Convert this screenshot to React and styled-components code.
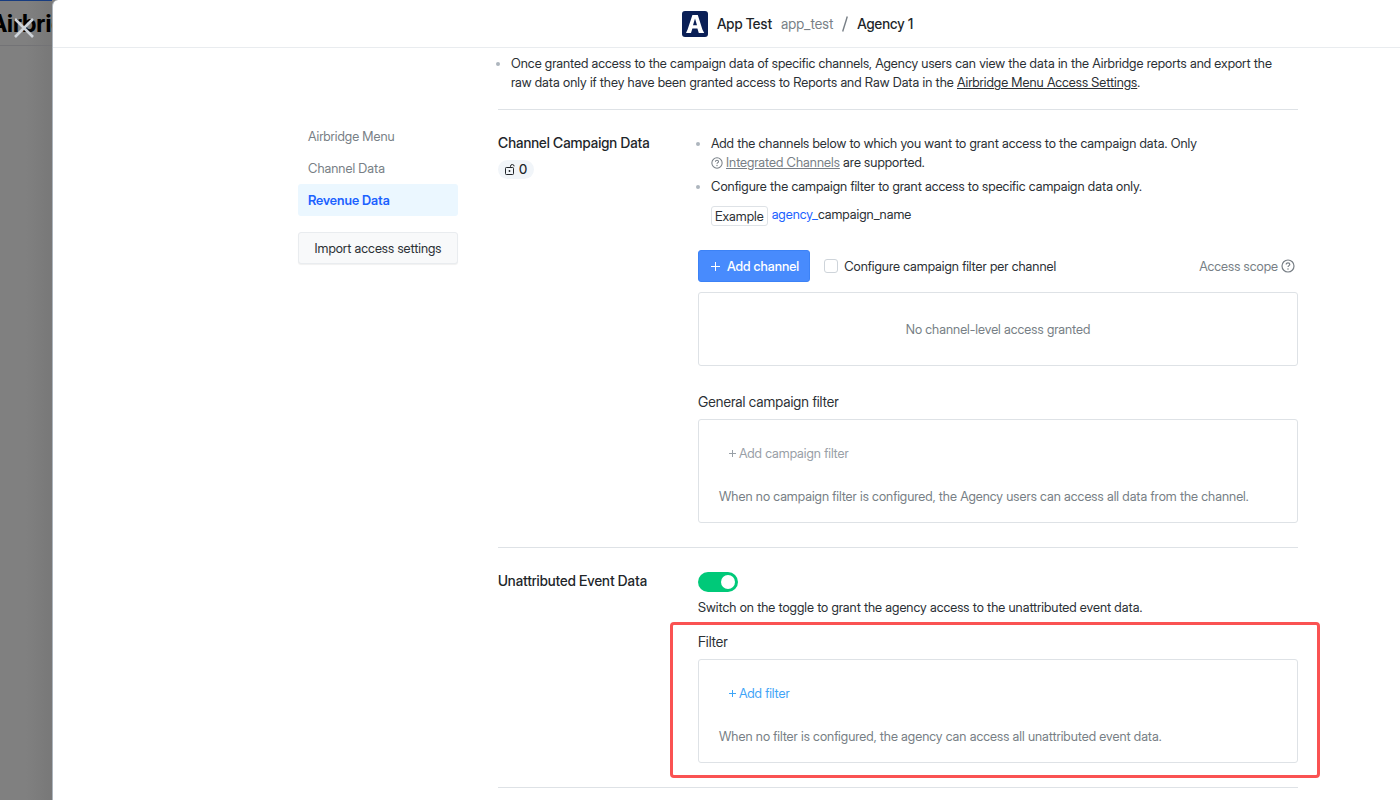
import React, {useState} from 'react'
import styled, {createGlobalStyle} from 'styled-components'

export default function App () {

    const [perChannel, setPerChannel] = useState(false);
    const [unattributed, setUnattributed] = useState(true);

    return (
        <>
            <GlobalStyle />
            <Page>
                <Backdrop>
                    <Brand>Airbridge</Brand>
                    <CloseButton type='button' aria-label='Close'>
                        <CloseIcon />
                    </CloseButton>
                </Backdrop>

                <Panel>
                    <Header>
                        <AppIcon />
                        <Crumb>App Test</Crumb>
                        <CrumbId>app_test</CrumbId>
                        <Slash />
                        <Crumb>Agency 1</Crumb>
                    </Header>

                    <Body>
                        <SideBar>
                            <SideLink href='#menu'>Airbridge Menu</SideLink>
                            <SideLink href='#channel'>Channel Data</SideLink>
                            <SideLink href='#revenue' $active>Revenue Data</SideLink>
                            <ImportButton type='button'>Import access settings</ImportButton>
                        </SideBar>

                        <Main>
                            <Intro>
                                <List>
                                    <ListItem>
                                        Once granted access to the campaign data of specific channels, Agency users can view the data in the Airbridge reports and export the raw data only if they have been granted access to Reports and Raw Data in the <TextLink href='#menu'>Airbridge Menu Access Settings</TextLink>.
                                    </ListItem>
                                </List>
                            </Intro>

                            <Section id='channel'>
                                <SectionLabel>
                                    <SectionTitle>Channel Campaign Data</SectionTitle>
                                    <Badge><UnlockIcon />0</Badge>
                                </SectionLabel>
                                <SectionContent>
                                    <List>
                                        <ListItem>
                                            Add the channels below to which you want to grant access to the campaign data. Only <HelpLink href='#channels'><HelpIcon size={12} /><u>Integrated Channels</u></HelpLink> are supported.
                                        </ListItem>
                                        <ListItem>
                                            Configure the campaign filter to grant access to specific campaign data only.
                                        </ListItem>
                                    </List>
                                    <Example>
                                        <Tag>Example</Tag>
                                        <span><Prefix>agency_</Prefix>campaign_name</span>
                                    </Example>
                                    <Actions>
                                        <AddButton type='button'><PlusIcon size={9} />Add channel</AddButton>
                                        <CheckLabel>
                                            <CheckBox
                                                type='checkbox'
                                                checked={perChannel}
                                                onChange={() => setPerChannel(!perChannel)}
                                            />
                                            Configure campaign filter per channel
                                        </CheckLabel>
                                        <Scope>Access scope<HelpIcon size={14} /></Scope>
                                    </Actions>
                                    <EmptyBox>No channel-level access granted</EmptyBox>
                                    <FilterGroup $gap='24px'>
                                        <FilterTitle>General campaign filter</FilterTitle>
                                        <FilterBox>
                                            <FilterButton type='button' disabled><PlusIcon size={7} />Add campaign filter</FilterButton>
                                            <Note>When no campaign filter is configured, the Agency users can access all data from the channel.</Note>
                                        </FilterBox>
                                    </FilterGroup>
                                </SectionContent>
                            </Section>

                            <Section id='revenue'>
                                <SectionLabel>
                                    <SectionTitle>Unattributed Event Data</SectionTitle>
                                </SectionLabel>
                                <SectionContent>
                                    <Switch
                                        type='checkbox'
                                        role='switch'
                                        id='unattributed'
                                        checked={unattributed}
                                        onChange={() => setUnattributed(!unattributed)}
                                    />
                                    <SwitchLabel htmlFor='unattributed'>
                                        Switch on the toggle to grant the agency access to the unattributed event data.
                                    </SwitchLabel>
                                    <FilterGroup $gap='13px'>
                                        <FilterTitle>Filter</FilterTitle>
                                        <FilterBox>
                                            <FilterButton type='button'><PlusIcon size={7} />Add filter</FilterButton>
                                            <Note>When no filter is configured, the agency can access all unattributed event data.</Note>
                                        </FilterBox>
                                        <Highlight />
                                    </FilterGroup>
                                </SectionContent>
                            </Section>
                        </Main>
                    </Body>
                </Panel>
            </Page>
        </>
    )
}

// icons

const CloseIcon = () => (
    <svg width='20' height='20' viewBox='0 0 20 20' fill='none' stroke='currentColor' strokeWidth='2.6'>
        <path d='M1 1l18 18M19 1L1 19' />
    </svg>
)

const PlusIcon = ({size}) => (
    <svg width={size} height={size} viewBox={`0 0 ${size} ${size}`} fill='none' stroke='currentColor' strokeWidth='1'>
        <path d={`M${size / 2} 0v${size}M0 ${size / 2}h${size}`} />
    </svg>
)

const HelpIcon = ({size}) => (
    <svg width={size} height={size} viewBox='0 0 14 14' fill='none' stroke='currentColor' strokeWidth='1.2'>
        <circle cx='7' cy='7' r='6' />
        <path d='M5.2 5.6c0-1.1.8-1.8 1.8-1.8s1.8.7 1.8 1.6c0 1.2-1.8 1.3-1.8 2.6' />
        <circle cx='7' cy='9.9' r='.75' fill='currentColor' stroke='none' />
    </svg>
)

const UnlockIcon = () => (
    <svg width='11' height='12' viewBox='0 0 11 12' fill='none' stroke='currentColor' strokeWidth='1'>
        <rect x='.5' y='3.5' width='8' height='7' rx='.8' />
        <path d='M5.5 3.5V2.3a1.8 1.8 0 0 1 3.6 0' />
        <circle cx='4.5' cy='7' r='.9' fill='currentColor' stroke='none' />
    </svg>
)

const Slash = () => (
    <svg width='6' height='16' viewBox='0 0 6 16' fill='none' stroke='#787f86' strokeWidth='1.4'>
        <path d='M5.3 .5L.7 15.5' />
    </svg>
)

const AppIcon = () => (
    <svg width='26' height='26' viewBox='0 0 26 26'>
        <rect width='26' height='26' rx='3' fill='#0a1f56' />
        <path fillRule='evenodd' fill='#fff' d='M10.4 4h5.4l4.6 14.6L22.2 22h-5.4l-1.4-4.4h-5L9 22H4l1.6-3.4zM13 7.6l-2 6.6h4z' />
    </svg>
)

// styles

const GlobalStyle = createGlobalStyle`
    * {
        box-sizing: border-box;
    }
    body {
        margin: 0;
        font-family: "Inter Display", Inter, "Liberation Sans", sans-serif;
        font-size: 13px;
        line-height: 19px;
        color: #2b3035;
        background: #fff;
    }
    button, input {
        font-family: inherit;
        font-size: inherit;
        margin: 0;
    }
    svg {
        flex: none;
    }
`

const Page = styled.div`
    display: flex;
    min-height: 100vh;
    background: #808080;
`

const Backdrop = styled.div`
    position: relative;
    flex: none;
    width: 52px;
    overflow: hidden;
    border-top: 1px solid #173c80;
    background: linear-gradient(to right, #808080 50%, #787878);
`

const Brand = styled.div`
    height: 45px;
    margin-left: -10px;
    border-bottom: 1px solid #737376;
    color: #000;
    font-size: 24px;
    font-weight: 700;
    line-height: 45px;
`

const CloseButton = styled.button`
    position: absolute;
    top: 17px;
    left: 14px;
    display: flex;
    padding: 0;
    border: 0;
    background: none;
    color: #ced4da;
    cursor: pointer;
`

const Panel = styled.div`
    flex: 1;
    min-width: 0;
    border-left: 1px solid #adb5bd;
    border-radius: 6px 0 0 0;
    background: #fff;
`

const Header = styled.header`
    display: flex;
    align-items: center;
    justify-content: center;
    gap: 9px;
    height: 48px;
    padding-left: 142px;
    border-bottom: 1px solid #e9ecef;
    font-size: 14px;
`

const Crumb = styled.span`
    color: #212529;
    font-weight: 500;
`

const CrumbId = styled.span`
    color: #787f86;
`

const Body = styled.div`
    display: flex;
    justify-content: center;
    gap: 40px;
    padding-left: 143px;
`

const SideBar = styled.nav`
    display: flex;
    flex-direction: column;
    flex: none;
    width: 160px;
    padding-top: 72px;
`

const SideLink = styled.a`
    padding: 0 10px;
    border-radius: 3px;
    background: ${(props) => (props.$active ? '#ebf7ff' : 'transparent')};
    color: ${(props) => (props.$active ? '#1c62ff' : '#787f86')};
    font-weight: ${(props) => (props.$active ? 600 : 400)};
    line-height: 32px;
    text-decoration: none;
`

const ImportButton = styled.button`
    height: 32px;
    margin-top: 16px;
    padding: 0;
    border: 1px solid #e9ecef;
    border-radius: 3px;
    background: #f8f9fa;
    box-shadow: 0 1px 1px rgba(0, 0, 0, 0.06);
    color: #2b3035;
    cursor: pointer;
`

const Main = styled.main`
    flex: 0 1 800px;
    min-width: 0;
`

const Intro = styled.div`
    padding: 6px 0 17px;
    border-bottom: 1px solid #dee2e6;
`

const Section = styled.section`
    display: flex;
    padding: 24px 0;
    border-bottom: 1px solid #dee2e6;
`

const SectionLabel = styled.div`
    flex: none;
    width: 200px;
`

const SectionContent = styled.div`
    flex: 1;
    min-width: 0;
`

const SectionTitle = styled.h2`
    margin: 0;
    color: #212529;
    font-size: 14px;
    font-weight: 500;
    line-height: 18px;
`

const Badge = styled.span`
    display: inline-flex;
    align-items: center;
    gap: 3px;
    margin-top: 8px;
    padding: 0 7px;
    border-radius: 10px;
    background: #f1f5f9;
    color: #212529;
    font-weight: 500;
`

const List = styled.ul`
    display: flex;
    flex-direction: column;
    gap: 5px;
    margin: 0;
    padding: 0;
    list-style: none;
`

const ListItem = styled.li`
    position: relative;
    padding: 0 10px 0 13px;
    &::before {
        content: '';
        position: absolute;
        top: 8px;
        left: -2px;
        width: 4px;
        height: 4px;
        border-radius: 50%;
        background: #adb5bd;
    }
`

const TextLink = styled.a`
    color: inherit;
`

const HelpLink = styled.a`
    color: #787f86;
    text-decoration: none;
    white-space: nowrap;
    svg {
        margin-right: 3px;
        vertical-align: -2px;
    }
`

const Example = styled.div`
    display: flex;
    gap: 4px;
    margin: 9px 0 0 13px;
`

const Tag = styled.span`
    padding: 0 3px;
    margin-top: 1px;
    border: 1px solid #dee2e6;
    border-radius: 3px;
    line-height: 18px;
`

const Prefix = styled.span`
    color: #1c62ff;
`

const Actions = styled.div`
    display: flex;
    align-items: center;
    margin: 24px 0 10px;
`

const AddButton = styled.button`
    display: flex;
    align-items: center;
    gap: 7px;
    height: 32px;
    padding: 0 10px 0 12px;
    border: 1px solid #3c82f6;
    border-radius: 3px;
    background: #488bfd;
    color: #fff;
    font-weight: 500;
    cursor: pointer;
`

const CheckLabel = styled.label`
    display: flex;
    align-items: center;
    gap: 6px;
    margin-left: 14px;
`

const CheckBox = styled.input`
    appearance: none;
    width: 14px;
    height: 14px;
    border: 1px solid #ced4da;
    border-radius: 3px;
    background: ${(props) => (props.checked ? '#488bfd' : '#fff')};
`

const Scope = styled.span`
    display: flex;
    align-items: center;
    gap: 3px;
    margin-left: auto;
    padding-right: 3px;
    color: #787f86;
`

const EmptyBox = styled.div`
    padding: 27px 0;
    border: 1px solid #dee2e6;
    border-radius: 3px;
    color: #787f86;
    line-height: 18px;
    text-align: center;
`

const FilterGroup = styled.div`
    position: relative;
    padding-top: ${(props) => props.$gap};
`

const FilterTitle = styled.h3`
    margin: 0 0 6px;
    font-size: 14px;
    font-weight: 400;
    line-height: 23px;
`

const FilterBox = styled.div`
    padding: 24px 20px 16px;
    border: 1px solid #dee2e6;
    border-radius: 3px;
`

const FilterButton = styled.button`
    display: flex;
    align-items: center;
    gap: 3px;
    padding: 0 10px;
    border: 0;
    background: none;
    color: #3fa5f7;
    line-height: 19px;
    cursor: pointer;
    &:disabled {
        color: #99a0a7;
        cursor: default;
    }
`

const Note = styled.p`
    margin: 24px 0 0;
    color: #787f86;
`

const Switch = styled.input`
    appearance: none;
    display: block;
    width: 40px;
    height: 20px;
    border-radius: 10px;
    background: ${(props) => (props.checked ? '#00c979' : '#ced4da')};
    cursor: pointer;
    &::before {
        content: '';
        display: block;
        width: 14px;
        height: 14px;
        margin: 3px 0 0 ${(props) => (props.checked ? '23px' : '3px')};
        border-radius: 50%;
        background: #fff;
    }
`

const SwitchLabel = styled.label`
    display: block;
    margin-top: 6px;
`

// frame drawn around the filter group
const Highlight = styled.div`
    position: absolute;
    top: 5px;
    right: -22px;
    bottom: -15px;
    left: -28px;
    border: 3px solid #fa5252;
    border-radius: 4px;
    pointer-events: none;
`
